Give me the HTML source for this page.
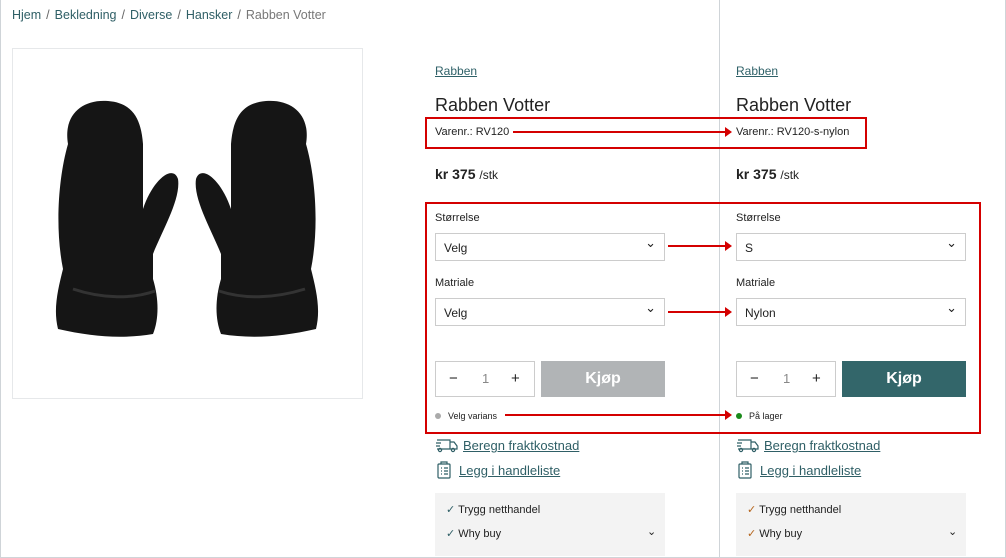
<!DOCTYPE html><html><head><meta charset="utf-8"><style>
*{box-sizing:border-box;margin:0;padding:0}
body{width:1006px;height:558px;overflow:hidden;background:#fff;font-family:"Liberation Sans",sans-serif;color:#222;position:relative}
.frame{position:absolute;left:0;top:0;width:1006px;height:558px;border:1px solid #cfd4d8;border-top:none}
.div{position:absolute;left:719px;top:0;width:1px;height:558px;background:#cfd4d8}
.a{position:absolute;white-space:nowrap}
.bc{left:12px;top:8px;font-size:12.5px;color:#2f5f66}
.bc span{color:#666;margin:0 5px}
.img{left:12px;top:48px;width:351px;height:351px;border:1px solid #e6e8ea}
.brand{font-size:12px;color:#2f6168;text-decoration:underline}
.title{font-size:18px;color:#222}
.sku{font-size:11px}
.price{font-size:14px;font-weight:bold}
.price small{font-weight:normal;font-size:12px}
.lbl{font-size:11px}
.sel{width:230px;height:28px;border:1px solid #ccc;font-size:12px;padding:7px 8px}
.sel:after{content:"⌄";position:absolute;right:8px;top:1px;font-size:13px}
.qty{width:100px;height:36px;border:1px solid #ccc;font-size:13px}
.qty b{position:absolute;top:8px;font-weight:normal;font-size:15px}
.buy{width:124px;height:36px;color:#fff;font-size:16px;font-weight:bold;text-align:center;line-height:36px}
.st{font-size:9px}
.dot{display:inline-block;width:6px;height:6px;border-radius:3px;margin-right:7px;vertical-align:0}
.lnk{font-size:13px;color:#2f5f66;text-decoration:underline}
.box{width:230px;height:63px;background:#f3f3f3;font-size:11px}
.red{position:absolute;border:2px solid #d40000}
.ar{position:absolute;height:2px;background:#d40000}
.ar:after{content:"";position:absolute;right:-2px;top:-4px;border-left:7px solid #d40000;border-top:5px solid transparent;border-bottom:5px solid transparent}
.ic{position:absolute}
</style></head><body>
<div class="frame"></div><div class="div"></div>
<div class="a bc">Hjem<span>/</span>Bekledning<span>/</span>Diverse<span>/</span>Hansker<span>/</span><i style="font-style:normal;color:#777">Rabben Votter</i></div>
<div class="a img"><svg width="349" height="349" viewBox="0 0 349 349">
<path d="M55 95 C50 65 70 50 95 52 C120 54 128 70 130 95 L130 160 C140 130 160 115 165 130 C168 150 150 180 140 205 L140 230 C146 250 146 270 140 285 C110 290 80 288 45 280 C40 260 45 240 50 220 C42 180 45 130 55 95Z" fill="#151515"/>
<path d="M293 95 C298 65 278 50 253 52 C228 54 220 70 218 95 L218 160 C208 130 188 115 183 130 C180 150 198 180 208 205 L208 230 C202 250 202 270 208 285 C238 290 268 288 303 280 C308 260 303 240 298 220 C306 180 303 130 293 95Z" fill="#151515"/>
<path d="M60 240 C90 250 120 250 142 242 M206 242 C230 250 260 250 292 240" stroke="#333" stroke-width="3" fill="none"/>
</svg></div>
<!-- left -->
<div class="a brand" style="left:435px;top:64px">Rabben</div>
<div class="a title" style="left:435px;top:95px">Rabben Votter</div>
<div class="a sku" style="left:435px;top:126px">Varenr.: RV120</div>
<div class="a price" style="left:435px;top:166px">kr 375 <small>/stk</small></div>
<div class="a lbl" style="left:435px;top:212px">Størrelse</div>
<div class="a sel" style="left:435px;top:233px">Velg</div>
<div class="a lbl" style="left:435px;top:277px">Matriale</div>
<div class="a sel" style="left:435px;top:298px">Velg</div>
<div class="a qty" style="left:435px;top:361px"><b style="left:13px">−</b><b style="left:46px;color:#888;font-size:13px;top:9px">1</b><b style="left:75px">+</b></div>
<div class="a buy" style="left:541px;top:361px;background:#b1b4b6">Kjøp</div>
<div class="a st" style="left:435px;top:411px"><span class="dot" style="background:#aaa"></span>Velg varians</div>
<svg class="ic" style="left:435px;top:437px" width="24" height="16" viewBox="0 0 24 16" fill="none" stroke="#2f5f66" stroke-width="1.2"><path d="M2 3h13v9H2M15 5h4l3 4v3h-7M1 6h5M1 9h4"/><circle cx="5" cy="13" r="1.6"/><circle cx="18" cy="13" r="1.6"/></svg>
<div class="a lnk" style="left:463px;top:438px">Beregn fraktkostnad</div>
<svg class="ic" style="left:437px;top:461px" width="14" height="18" viewBox="0 0 14 18" fill="none" stroke="#2f5f66" stroke-width="1.2"><rect x="1" y="3" width="12" height="14" rx="1"/><path d="M4 3V1h6v2M4 7h1M7 7h4M4 10h1M7 10h4M4 13h1M7 13h4"/></svg>
<div class="a lnk" style="left:459px;top:463px">Legg i handleliste</div>
<div class="a box" style="left:435px;top:493px"><div class="a" style="left:11px;top:10px"><span style="color:#2f5f66">✓</span> Trygg netthandel</div><div class="a" style="left:11px;top:34px"><span style="color:#2f5f66">✓</span> Why buy</div><div class="a" style="left:212px;top:32px">⌄</div></div>
<!-- right -->
<div class="a brand" style="left:736px;top:64px">Rabben</div>
<div class="a title" style="left:736px;top:95px">Rabben Votter</div>
<div class="a sku" style="left:736px;top:126px">Varenr.: RV120-s-nylon</div>
<div class="a price" style="left:736px;top:166px">kr 375 <small>/stk</small></div>
<div class="a lbl" style="left:736px;top:212px">Størrelse</div>
<div class="a sel" style="left:736px;top:233px">S</div>
<div class="a lbl" style="left:736px;top:277px">Matriale</div>
<div class="a sel" style="left:736px;top:298px">Nylon</div>
<div class="a qty" style="left:736px;top:361px"><b style="left:13px">−</b><b style="left:46px;color:#888;font-size:13px;top:9px">1</b><b style="left:75px">+</b></div>
<div class="a buy" style="left:842px;top:361px;background:#33666a">Kjøp</div>
<div class="a st" style="left:736px;top:411px"><span class="dot" style="background:#1a8a1a"></span>På lager</div>
<svg class="ic" style="left:736px;top:437px" width="24" height="16" viewBox="0 0 24 16" fill="none" stroke="#2f5f66" stroke-width="1.2"><path d="M2 3h13v9H2M15 5h4l3 4v3h-7M1 6h5M1 9h4"/><circle cx="5" cy="13" r="1.6"/><circle cx="18" cy="13" r="1.6"/></svg>
<div class="a lnk" style="left:764px;top:438px">Beregn fraktkostnad</div>
<svg class="ic" style="left:738px;top:461px" width="14" height="18" viewBox="0 0 14 18" fill="none" stroke="#2f5f66" stroke-width="1.2"><rect x="1" y="3" width="12" height="14" rx="1"/><path d="M4 3V1h6v2M4 7h1M7 7h4M4 10h1M7 10h4M4 13h1M7 13h4"/></svg>
<div class="a lnk" style="left:760px;top:463px">Legg i handleliste</div>
<div class="a box" style="left:736px;top:493px"><div class="a" style="left:11px;top:10px"><span style="color:#b5651d">✓</span> Trygg netthandel</div><div class="a" style="left:11px;top:34px"><span style="color:#b5651d">✓</span> Why buy</div><div class="a" style="left:212px;top:32px">⌄</div></div>
<!-- annotations -->
<div class="red" style="left:425px;top:117px;width:442px;height:32px"></div>
<div class="red" style="left:425px;top:202px;width:556px;height:232px"></div>
<div class="ar" style="left:513px;top:131px;width:217px"></div>
<div class="ar" style="left:668px;top:245px;width:62px"></div>
<div class="ar" style="left:668px;top:311px;width:62px"></div>
<div class="ar" style="left:505px;top:414px;width:225px"></div>
</body></html>
